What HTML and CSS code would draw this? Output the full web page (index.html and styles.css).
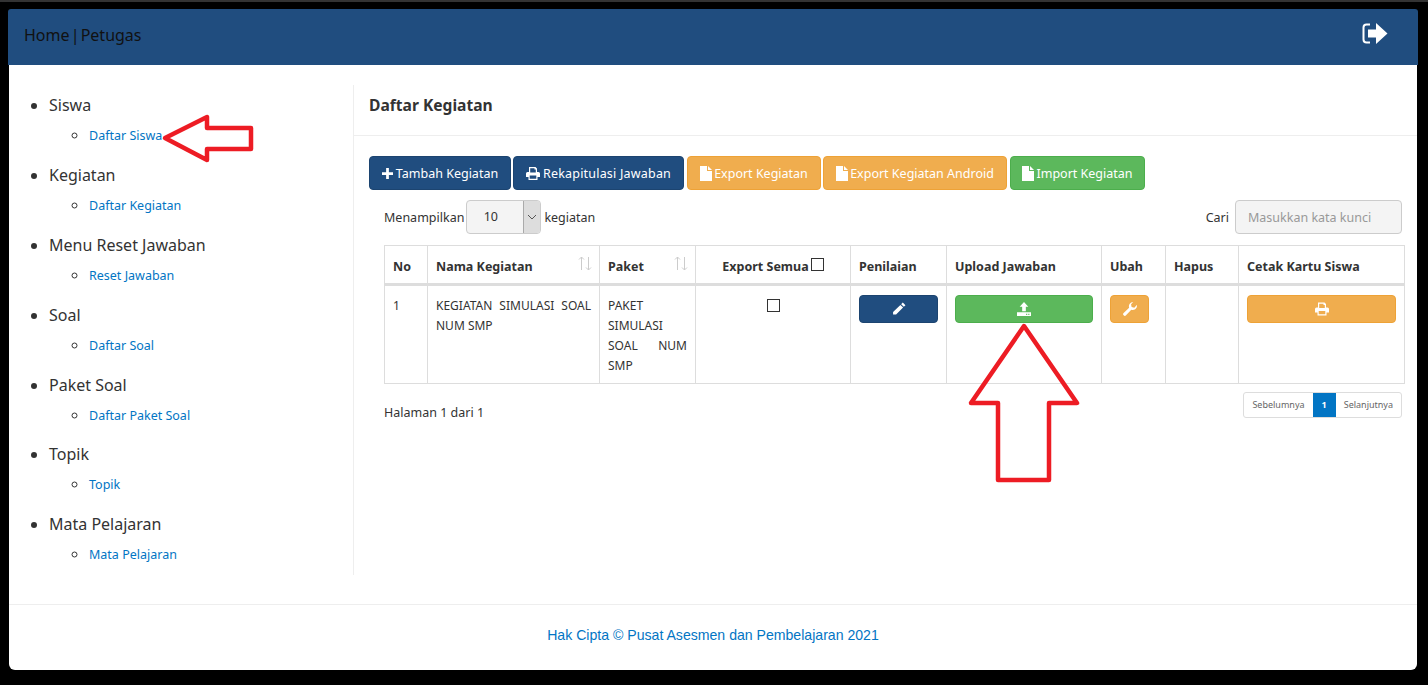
FILE: index.html
```html
<!DOCTYPE html>
<html lang="en">
<head>
    <meta charset="UTF-8">
    <title>Daftar Kegiatan</title>
    <link rel="stylesheet" href="styles.css">
</head>
<body>
    <div class="window">
        <header class="topbar">
            <span class="brand">Home | Petugas</span>
            <svg class="logout" viewBox="0 0 26 21" width="26" height="21">
                <path d="M8 1.500H4.500Q1.500 1.500 1.500 4.500V16.500Q1.500 19.500 4.500 19.500H8" fill="none" stroke="#fff" stroke-width="2"/>
                <path d="M6 6.500H14V0L25.500 10.500 14 21V14.500H6Z" fill="#fff"/>
            </svg>
        </header>

        <div class="page">
            <aside class="sidebar">
                <ul class="menu">
                    <li>Siswa<ul><li><a href="#">Daftar Siswa</a></li></ul></li>
                    <li>Kegiatan<ul><li><a href="#">Daftar Kegiatan</a></li></ul></li>
                    <li>Menu Reset Jawaban<ul><li><a href="#">Reset Jawaban</a></li></ul></li>
                    <li>Soal<ul><li><a href="#">Daftar Soal</a></li></ul></li>
                    <li>Paket Soal<ul><li><a href="#">Daftar Paket Soal</a></li></ul></li>
                    <li>Topik<ul><li><a href="#">Topik</a></li></ul></li>
                    <li>Mata Pelajaran<ul><li><a href="#">Mata Pelajaran</a></li></ul></li>
                </ul>
            </aside>

            <main class="content">
                <h1 class="title">Daftar Kegiatan</h1>
                <div class="toolbar">
                    <button class="btn blue w-tambah"><svg class="ico plus" viewBox="0 0 12 12"><path d="M4.500 0h3v4.500h4.500v3h-4.500v4.500h-3v-4.500h-4.500v-3h4.500z"/></svg>Tambah Kegiatan</button>
                    <button class="btn blue w-rekap"><svg class="ico print" viewBox="0 0 14 13"><path fill-rule="evenodd" d="M3 0h6.500L11 1.500V5h1.500Q14 5 14 6.500V10h-2.500v3h-9v-3H0V6.500Q0 5 1.500 5H3zM4.200 1.200V5.500h5.600V2.500H8.500V1.200zM3.700 8.500v3.300h6.600V8.500z"/></svg>Rekapitulasi Jawaban</button>
                    <button class="btn orange w-export"><svg class="ico doc" viewBox="0 0 12 15"><path d="M0 0h7v5h5v10H0zM8 0l4 4H8z"/></svg>Export Kegiatan</button>
                    <button class="btn orange w-android"><svg class="ico doc" viewBox="0 0 12 15"><path d="M0 0h7v5h5v10H0zM8 0l4 4H8z"/></svg>Export Kegiatan Android</button>
                    <button class="btn green w-import"><svg class="ico doc" viewBox="0 0 12 15"><path d="M0 0h7v5h5v10H0zM8 0l4 4H8z"/></svg>Import Kegiatan</button>
                </div>

                <div class="table-wrap">
                    <div class="controls">
                        <div class="length">
                            Menampilkan
                            <span class="select"><span class="select-value">10</span><span class="select-arrow"><svg viewBox="0 0 10 6" width="10" height="6"><path d="M1 1l4 4 4-4" fill="none" stroke="#555" stroke-width="1"/></svg></span></span>
                            kegiatan
                        </div>
                        <div class="search">
                            Cari
                            <input class="search-input" type="text" placeholder="Masukkan kata kunci">
                        </div>
                    </div>

                    <table class="grid">
                        <colgroup>
                            <col class="c-no"><col class="c-nama"><col class="c-paket"><col class="c-export">
                            <col class="c-nilai"><col class="c-upload"><col class="c-ubah"><col class="c-hapus"><col class="c-cetak">
                        </colgroup>
                        <thead>
                            <tr>
                                <th>No</th>
                                <th class="sortable">Nama Kegiatan<svg class="sort" viewBox="0 0 14 15" width="14" height="15"><path d="M3.500 14V1M1 3.500L3.500 1 6 3.500M10.500 1V14M8 11.500L10.500 14 13 11.500"/></svg></th>
                                <th class="sortable">Paket<svg class="sort" viewBox="0 0 14 15" width="14" height="15"><path d="M3.500 14V1M1 3.500L3.500 1 6 3.500M10.500 1V14M8 11.500L10.500 14 13 11.500"/></svg></th>
                                <th class="center">Export Semua<span class="check head-check"></span></th>
                                <th>Penilaian</th>
                                <th>Upload Jawaban</th>
                                <th>Ubah</th>
                                <th>Hapus</th>
                                <th>Cetak Kartu Siswa</th>
                            </tr>
                        </thead>
                        <tbody>
                            <tr>
                                <td>1</td>
                                <td class="justify">KEGIATAN SIMULASI SOAL NUM SMP</td>
                                <td class="justify">PAKET SIMULASI SOAL NUM SMP</td>
                                <td class="center"><span class="check"></span></td>
                                <td><button class="btn-row blue"><svg class="ico-row" viewBox="0 0 13 13"><path d="M10 0.500l2.500 2.500-1.500 1.500-2.500-2.500zM7.800 2.700l2.500 2.500-6.500 6.500H1V9.200z"/></svg></button></td>
                                <td><button class="btn-row green"><svg class="ico-row" viewBox="0 0 13 13"><path fill-rule="evenodd" d="M6.500 0L10.500 4.500H8.200V8.500H4.800V4.500H2.500zM0 9.500h13V13H0zM8.500 11h1v1h-1zM10.500 11h1v1h-1z"/></svg></button></td>
                                <td><button class="btn-row orange w-ubah"><svg class="ico-row" viewBox="0 0 13 13"><path d="M13 3.500a4 4 0 0 1-5.300 3.800L2.800 12.400a1.500 1.500 0 0 1-2.200-2.200L5.700 5.300A4 4 0 0 1 9.500 0L7.500 2.200l.5 2.500 2.500.6L12.800 2.800q.2.300.2.700z"/></svg></button></td>
                                <td></td>
                                <td><button class="btn-row orange"><svg class="ico-row" viewBox="0 0 14 13"><path fill-rule="evenodd" d="M3 0h6.500L11 1.500V5h1.500Q14 5 14 6.500V10h-2.500v3h-9v-3H0V6.500Q0 5 1.500 5H3zM4.200 1.200V5.500h5.600V2.500H8.500V1.200zM3.700 8.500v3.300h6.600V8.500z"/></svg></button></td>
                            </tr>
                        </tbody>
                    </table>

                    <div class="table-foot">
                        <div class="info">Halaman 1 dari 1</div>
                        <div class="pager">
                            <a class="pager-item" href="#">Sebelumnya</a>
                            <a class="pager-item active" href="#">1</a>
                            <a class="pager-item" href="#">Selanjutnya</a>
                        </div>
                    </div>
                </div>
            </main>
        </div>

        <footer class="footer">Hak Cipta © Pusat Asesmen dan Pembelajaran 2021</footer>
    </div>

    <!-- red annotation arrows drawn over the page -->
    <svg class="arrows" width="1428" height="685" viewBox="0 0 1428 685">
        <path d="M165 138L207 117V128H251V149H207V160Z"/>
        <path d="M1024 326L1077 403H1049V480H998V403H971Z"/>
    </svg>
</body>
</html>
```

FILE: styles.css
```css
* {
    box-sizing: border-box;
}

html, body {
    height: 100%;
}

body {
    margin: 0;
    background-color: #000;
    border-top: 2px solid #333;
    font-family: "Noto Sans", sans-serif;
    font-size: 13px;
    color: #333;
    overflow: hidden;
    position: relative;
}

.window {
    margin: 7px 10px 0 8px;
    height: 661px;
    display: flex;
    flex-direction: column;
}

.topbar {
    height: 56px;
    flex-shrink: 0;
    background-color: #204d7f;
    border-radius: 3px 3px 0 0;
    display: flex;
    align-items: center;
    justify-content: space-between;
    padding: 0 30px 4px 16px;
}

.brand {
    font-size: 16px;
    word-spacing: -3px;
    color: #111;
}

.logout {
    margin-bottom: 4px;
}

.page {
    display: flex;
    height: 539px;
    margin: 0 1px;
    padding-bottom: 29px;
    background-color: #fff;
}

.sidebar {
    width: 345px;
    margin-top: 20px;
    border-right: 1px solid #eee;
    flex-shrink: 0;
}

.menu {
    margin: 0;
    padding: 0 0 0 40px;
    font-size: 16px;
    list-style: disc;
}

.menu > li {
    height: 69.900px;
    line-height: 22px;
    padding-top: 9px;
}

.menu ul {
    margin: 8px 0 0;
    padding-left: 40px;
    list-style: circle;
    font-size: 12.500px;
    line-height: 20px;
}

.menu ul li::marker {
    font-size: 15px;
}

.menu a {
    color: #0275c4;
    text-decoration: none;
}

.content {
    flex: 1;
    min-width: 0;
}

.title {
    margin: 0;
    height: 71px;
    padding: 29px 0 0 15px;
    font-size: 15.600px;
    line-height: 22px;
    font-weight: 700;
    color: #333;
    border-bottom: 1px solid #eee;
}

.toolbar {
    display: flex;
    gap: 2px;
    margin: 20px 0 0 15px;
}

.btn {
    height: 34px;
    border: 1px solid transparent;
    border-radius: 4px;
    color: #fff;
    font-family: inherit;
    font-size: 12.500px;
    display: flex;
    align-items: center;
    justify-content: center;
    padding: 0;
}

.w-tambah { width: 142px; }
.w-rekap { width: 171px; letter-spacing: 0.2px; }
.w-export { width: 134px; margin-left: 1px; }
.w-android { width: 184px; }
.w-import { width: 135px; margin-left: 1px; }

.blue { background-color: #204d7f; border-color: #1c4470; }
.orange { background-color: #f0ad4e; border-color: #eea236; }
.green { background-color: #5cb85c; border-color: #4cae4c; }

.ico {
    fill: #fff;
    margin-right: 3px;
}

.ico.plus {
    width: 11px;
    height: 11px;
}

.ico.print {
    width: 14px;
    height: 13px;
}

.ico.doc {
    width: 12px;
    height: 15px;
    margin-right: 2px;
}

.table-wrap {
    margin: 10px 15px 0 30px;
}

.controls {
    display: flex;
    justify-content: space-between;
    align-items: center;
    height: 34px;
}

.length {
    display: flex;
    align-items: center;
    gap: 2px;
    font-size: 12.500px;
}

.select {
    width: 75px;
    height: 34px;
    margin-right: 1px;
    border: 1px solid #ccc;
    border-radius: 4px;
    background-color: #f4f4f4;
    display: flex;
    overflow: hidden;
}

.select-value {
    flex: 1;
    padding-right: 9px;
    text-align: center;
    line-height: 32px;
}

.select-arrow {
    width: 17px;
    background-color: #ddd;
    border-left: 1px solid #aaa;
    display: flex;
    align-items: center;
    justify-content: center;
}

.search {
    display: flex;
    align-items: center;
    gap: 6px;
    font-size: 12.500px;
}

.search-input {
    width: 167px;
    height: 34px;
    padding: 0 12px;
    border: 1px solid #ccc;
    border-radius: 4px;
    background-color: #f4f4f4;
    font-family: inherit;
    font-size: 12.500px;
}

.search-input::placeholder {
    color: #999;
}

.grid {
    width: 1020px;
    margin-top: 11px;
    border-collapse: collapse;
    table-layout: fixed;
    font-size: 12px;
    line-height: 20px;
}

.c-no { width: 43px; }
.c-nama { width: 172px; }
.c-paket { width: 96px; }
.c-export { width: 155px; }
.c-nilai { width: 96px; }
.c-upload { width: 155px; }
.c-ubah { width: 64px; }
.c-hapus { width: 73px; }
.c-cetak { width: 166px; }

.grid th, .grid td {
    border: 1px solid #ddd;
    padding: 8px;
    vertical-align: top;
    text-align: left;
}

.grid th {
    height: 38px;
    padding-top: 11px;
    padding-bottom: 6px;
    border-bottom: 3px solid #ddd;
    font-weight: 700;
    font-size: 12.500px;
    white-space: nowrap;
}

.grid td {
    height: 96px;
    padding-top: 10px;
    padding-bottom: 7px;
}

.grid .center {
    text-align: center;
}

.grid .justify {
    text-align: justify;
}

.sortable {
    position: relative;
}

.sort {
    position: absolute;
    top: 10px;
    right: 7px;
    fill: none;
    stroke: #ccc;
    stroke-width: 1;
}

.check {
    display: inline-block;
    width: 13px;
    height: 13px;
    margin-top: -2px;
    border: 1px solid #333;
    vertical-align: middle;
}

.check.head-check {
    margin: -6px 0 0 2px;
}

.btn-row {
    display: flex;
    align-items: center;
    justify-content: center;
    width: 100%;
    height: 28px;
    margin-top: -1px;
    border-width: 1px;
    border-style: solid;
    border-radius: 4px;
    padding: 0;
}

.btn-row.w-ubah {
    width: 39px;
}

.ico-row {
    width: 14px;
    height: 14px;
    fill: #fff;
}

.table-foot {
    display: flex;
    justify-content: space-between;
    margin-top: 8px;
}

.info {
    font-size: 12.500px;
    line-height: 42px;
}

.pager {
    display: flex;
    height: 26px;
    border: 1px solid #ddd;
    border-radius: 3px;
}

.pager-item {
    padding: 0 8px;
    font-size: 9px;
    line-height: 24px;
    color: #666;
    text-decoration: none;
}

.pager-item.active {
    padding: 0 9px;
    background-color: #0275c4;
    color: #fff;
    font-weight: 700;
}

.footer {
    flex: 1;
    margin: 0 1px;
    border-top: 1px solid #eee;
    border-radius: 0 0 6px 6px;
    padding-top: 20px;
    background-color: #fff;
    text-align: center;
    font-family: "Liberation Sans", sans-serif;
    font-size: 14.100px;
    line-height: 20px;
    color: #0275c4;
}

.arrows {
    position: absolute;
    top: -2px;
    left: 0;
    pointer-events: none;
}

.arrows path {
    fill: none;
    stroke: #ed1c24;
    stroke-width: 4.500;
    stroke-linejoin: round;
}
```
